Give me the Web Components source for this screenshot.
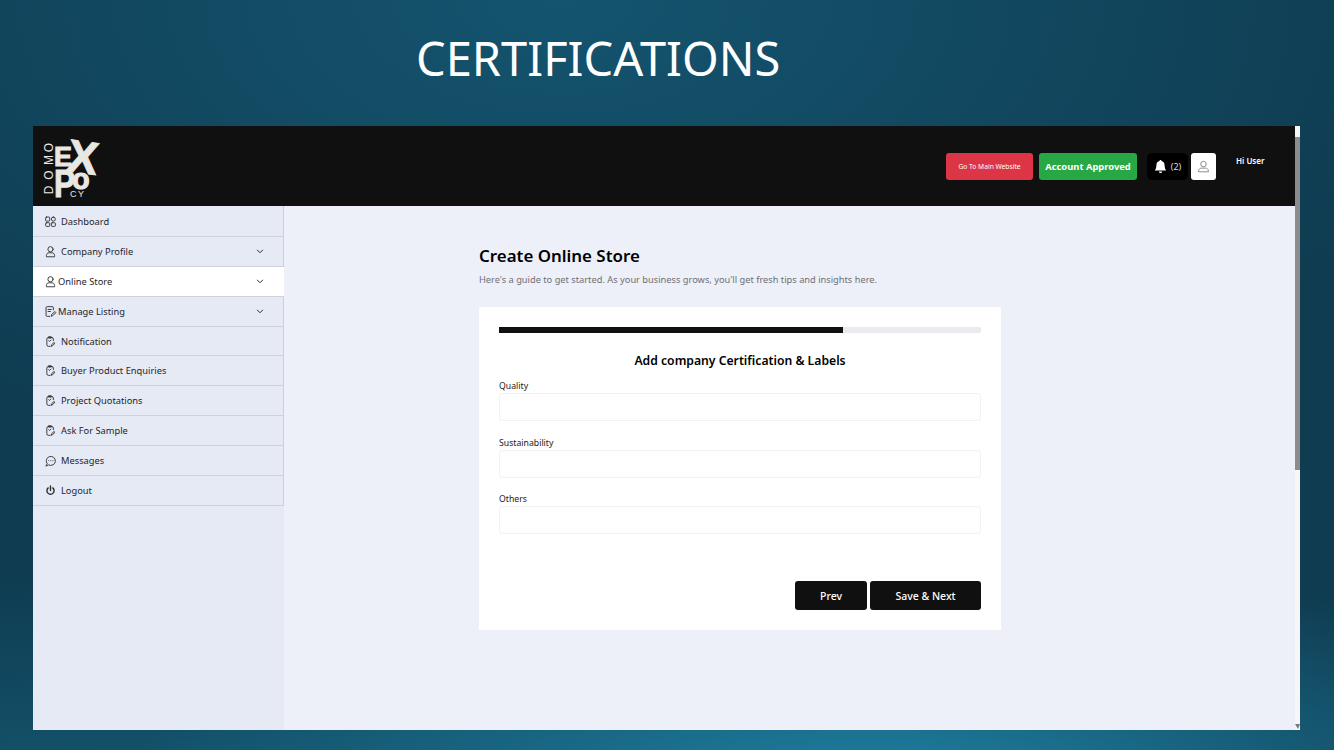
<!DOCTYPE html>
<html lang="en">
<head>
<meta charset="utf-8">
<title>Certifications</title>
<style>
html, body { margin: 0; height: 100%; overflow: hidden; }
body { font-family: "Noto Sans", sans-serif; }
</style>
</head>
<body>
<slide-page>
  <span slot="title">CERTIFICATIONS</span>
  <app-window>
    <app-header slot="header"></app-header>
    <side-nav slot="nav">
      <nav-item icon="grid" label="Dashboard"></nav-item>
      <nav-item icon="user" label="Company Profile" chevron></nav-item>
      <nav-item icon="user" label="Online Store" chevron active tight></nav-item>
      <nav-item icon="note" label="Manage Listing" chevron tight></nav-item>
      <nav-item icon="task" label="Notification"></nav-item>
      <nav-item icon="task" label="Buyer Product Enquiries"></nav-item>
      <nav-item icon="task" label="Project Quotations"></nav-item>
      <nav-item icon="task" label="Ask For Sample"></nav-item>
      <nav-item icon="chat" label="Messages"></nav-item>
      <nav-item icon="power" label="Logout"></nav-item>
    </side-nav>
    <store-form slot="main">
      <form-field label="Quality"></form-field>
      <form-field label="Sustainability"></form-field>
      <form-field label="Others"></form-field>
    </store-form>
  </app-window>
</slide-page>

<script>
const icons = {
  grid: '<rect x="2" y="2.5" width="5" height="5" rx="1"/><rect x="9" y="2.500" width="5" height="5" rx="2.500"/><rect x="2" y="9.500" width="5" height="4.500" rx="1"/><rect x="9" y="9.500" width="5" height="4.500" rx="1"/>',
  user: '<circle cx="8" cy="5.200" r="3.200"/><path d="M3 14v-1.200C3 10.800 4.600 9.600 6 9.600h4c1.400 0 3 1.200 3 3.200V14z"/>',
  note: '<path d="M11.500 6V3.500a1.500 1.500 0 0 0-1.500-1.500H4a1.500 1.500 0 0 0-1.500 1.500v9A1.500 1.500 0 0 0 4 14h3"/><path d="M5 5.500h4M5 8h3"/><path d="M9 13.500l.5-2 4-3.500 1.300 1.300-4 3.700z"/>',
  task: '<path d="M11.500 7V5a2 2 0 0 0-2-2h-4a2 2 0 0 0-2 2v7a2 2 0 0 0 2 2h2"/><path d="M6 2.200h3v1.600H6z"/><path d="M5.800 7l1 1 1.600-1.800"/><path d="M9 13.500l.4-1.600 3-2.700 1.100 1.100-3 2.800z"/>',
  chat: '<path d="M2.500 14.500l1.500-2.500a5.600 5.600 0 1 1 2 1.600z"/><path d="M5.800 8.200h.1M8.400 8.200h.1M11 8.200h.1"/>',
  power: '<path d="M8 2.500v5.500" stroke-width="1.700"/><path d="M5.200 4.800a4.400 4.400 0 1 0 5.600 0" stroke-width="1.700"/>'
}

customElements.define('slide-page', class extends HTMLElement {
  constructor () {
    super()
    this.attachShadow({ mode: 'open' }).innerHTML = `
      <style>
        :host {
          display: flex;
          flex-direction: column;
          width: 1334px;
          height: 750px;
          box-sizing: border-box;
          padding: 0 34px 20px 33px;
          background:
            radial-gradient(ellipse 760px 240px at 66% 106%, #1f84a6 0%, rgba(31,132,166,0) 100%),
            radial-gradient(ellipse 900px 220px at 10% 106%, #14566f 0%, rgba(20,86,111,0) 100%),
            radial-gradient(ellipse 900px 500px at 42% 0%, #14546f 0%, rgba(20,84,111,0) 100%),
            #0f3c51;
        }
        h1 {
          margin: 0;
          height: 126px;
          box-sizing: border-box;
          padding: 26px 0 0 383px;
          font: 400 47px/64px "Noto Sans", sans-serif;
          color: #fff;
        }
      </style>
      <h1><slot name="title"></slot></h1>
      <slot></slot>`
  }
})

customElements.define('app-window', class extends HTMLElement {
  constructor () {
    super()
    this.attachShadow({ mode: 'open' }).innerHTML = `
      <style>
        :host {
          display: grid;
          grid-template-columns: 1fr 5px;
          height: 604px;
          background: #fff;
        }
        .page {
          display: grid;
          grid-template-columns: 251px 1fr;
          grid-template-rows: 80px 1fr;
          min-width: 0;
        }
        .head { grid-column: 1 / 3; }
        .bar {
          display: flex;
          flex-direction: column;
          background: #f6f6f8;
        }
        .up { height: 11px; }
        .thumb { width: 5px; height: 333px; background: #8a8c90; }
        .rest { flex: 1; }
        .down {
          width: 0; height: 0;
          margin-bottom: 1px;
          border-left: 3px solid transparent;
          border-right: 2px solid transparent;
          border-top: 5px solid #77797d;
        }
      </style>
      <div class="page">
        <div class="head"><slot name="header"></slot></div>
        <slot name="nav"></slot>
        <slot name="main"></slot>
      </div>
      <div class="bar"><div class="up"></div><div class="thumb"></div><div class="rest"></div><div class="down"></div></div>`
  }
})

customElements.define('app-header', class extends HTMLElement {
  constructor () {
    super()
    this.attachShadow({ mode: 'open' }).innerHTML = `
      <style>
        :host {
          display: flex;
          align-items: flex-start;
          height: 80px;
          background: #111011;
          color: #fff;
          font-family: "Noto Sans", sans-serif;
        }
        .logo { margin: 2px 0 0 10px; flex: none; }
        .logo text { fill: #e9e7e2; font-family: "Liberation Sans", sans-serif; }
        .logo .big { font-weight: 700; stroke: #e9e7e2; stroke-width: 1px; }
        .tools {
          margin: 27px 0 0 auto;
          display: flex;
          align-items: center;
        }
        .btn {
          height: 27px;
          display: flex;
          align-items: center;
          justify-content: center;
          border-radius: 3px;
          box-sizing: border-box;
        }
        .site { width: 87px; background: #dc3545; font-size: 6.700px; margin-right: 6px; }
        .ok { width: 98px; background: #28a745; font-size: 9.400px; font-weight: 700; margin-right: 10px; }
        .bell { width: 41px; background: #000; font-size: 9px; gap: 4px; border-radius: 5px; margin-right: 3px; color: #ddd; }
        .me { width: 25px; background: #fff; border-radius: 3px; margin-right: 20px; }
        .hi { align-self: flex-start; margin: 1px 29px 0 0; font-size: 8px; font-weight: 600; line-height: 14px; width: 30px; white-space: nowrap; }
      </style>
      <svg class="logo" width="66" height="78" viewBox="0 -6 66 78" aria-label="Expo logo">
        <text transform="translate(9.500 13.500) rotate(-90)" text-anchor="middle" font-size="12">O</text>
        <text transform="translate(9.500 26) rotate(-90)" text-anchor="middle" font-size="12">M</text>
        <text transform="translate(9.500 41) rotate(-90)" text-anchor="middle" font-size="12">O</text>
        <text transform="translate(9.500 56) rotate(-90)" text-anchor="middle" font-size="12">D</text>
        <text class="big" x="11" y="32" font-size="27">E</text>
        <text class="big" x="40" y="39" font-size="46" text-anchor="middle" transform="rotate(8 40 22)">X</text>
        <text class="big" x="11" y="63" font-size="38" textLength="21" lengthAdjust="spacingAndGlyphs">P</text>
        <text class="big" x="29" y="54.500" font-size="29">o</text>
        <text x="27" y="63" font-size="9" letter-spacing="1.500">CY</text>
      </svg>
      <div class="tools">
        <div class="btn site">Go To Main Website</div>
        <div class="btn ok">Account Approved</div>
        <div class="btn bell">
          <svg width="13" height="13" viewBox="0 0 16 16" fill="#fff"><path d="M8 16a2 2 0 0 0 2-2H6a2 2 0 0 0 2 2zm.9-14.900a1 1 0 1 0-1.800 0A5 5 0 0 0 3 6c0 1.100-.5 5.200-2 7h14c-1.500-1.800-2-5.900-2-7a5 5 0 0 0-4.100-4.900z"/></svg>
          <span>(2)</span>
        </div>
        <div class="btn me">
          <svg width="13" height="13" viewBox="0 0 16 16" fill="none" stroke="#666" stroke-width="0.900"><circle cx="8" cy="5" r="3.400"/><path d="M2 14.500v-1.300C2 11.200 4 10 5.500 10h5c1.500 0 3.500 1.200 3.500 3.200v1.300z"/></svg>
        </div>
        <div class="hi">Hi User</div>
      </div>`
  }
})

customElements.define('side-nav', class extends HTMLElement {
  constructor () {
    super()
    this.attachShadow({ mode: 'open' }).innerHTML = `
      <style>
        :host {
          display: block;
          background: #e6eaf5;
          box-sizing: border-box;
        }
        .list {
          display: flex;
          flex-direction: column;
          padding-top: 1px;
          border-right: 1px solid #cdd0da;
        }
      </style>
      <div class="list"><slot></slot></div>`
  }
})

customElements.define('nav-item', class extends HTMLElement {
  connectedCallback () {
    const tight = this.hasAttribute('tight')
    this.attachShadow({ mode: 'open' }).innerHTML = `
      <style>
        :host {
          display: flex;
          align-items: center;
          height: 29.900px;
          box-sizing: border-box;
          border-bottom: 1px solid #cfd2dd;
          padding: 0 19px 0 11px;
          font: 400 9.300px "Noto Sans", sans-serif;
          color: #24262b;
        }
        :host([active]) { background: #fff; margin-right: -1px; padding-right: 20px; }
        svg.ico { flex: none; margin-right: ${tight ? 1 : 4}px; }
        .label { flex: 1; white-space: nowrap; }
        svg.chev { flex: none; }
      </style>
      <svg class="ico" width="13" height="13" viewBox="0 0 16 16" fill="none" stroke="#2a2c31" stroke-width="1.100" stroke-linejoin="round" stroke-linecap="round">${icons[this.getAttribute('icon')]}</svg>
      <span class="label">${this.getAttribute('label')}</span>
      ${this.hasAttribute('chevron') ? '<svg class="chev" width="8" height="5" viewBox="0 0 9 6" fill="none" stroke="#2a2c31" stroke-width="1.200"><path d="M1 1l3.500 3.500L8 1"/></svg>' : ''}`
  }
})

customElements.define('store-form', class extends HTMLElement {
  constructor () {
    super()
    this.attachShadow({ mode: 'open' }).innerHTML = `
      <style>
        :host {
          display: block;
          background: #edf0f8;
          padding: 39px 0 0 195px;
          color: #000;
          font-family: "Noto Sans", sans-serif;
        }
        h2 { margin: 0; font-size: 16.900px; font-weight: 600; line-height: 22px; }
        .sub { margin: 6px 0 20px; font-size: 9.270px; line-height: 14px; color: #6d6f75; }
        .card {
          width: 522px;
          height: 323px;
          box-sizing: border-box;
          background: #fff;
          padding: 20px;
          display: flex;
          flex-direction: column;
        }
        .track { height: 6px; background: #e9ebef; border-radius: 1px; flex: none; }
        .fill { width: 344px; height: 6px; background: #111011; }
        h3 { margin: 18px 0 9px; height: 19px; text-align: center; font-size: 12.200px; font-weight: 600; line-height: 19px; }
        .fields { display: flex; flex-direction: column; gap: 14.500px; }
        .actions { margin-top: auto; display: flex; justify-content: flex-end; gap: 3px; }
        button {
          height: 29px;
          border: 0;
          border-radius: 3px;
          background: #111011;
          color: #fff;
          font: 500 10.500px "Noto Sans", sans-serif;
        }
        .prev { width: 72px; }
        .next { width: 111px; }
      </style>
      <h2>Create Online Store</h2>
      <p class="sub">Here's a guide to get started. As your business grows, you'll get fresh tips and insights here.</p>
      <div class="card">
        <div class="track"><div class="fill"></div></div>
        <h3>Add company Certification &amp; Labels</h3>
        <div class="fields"><slot></slot></div>
        <div class="actions">
          <button class="prev">Prev</button>
          <button class="next">Save &amp; Next</button>
        </div>
      </div>`
  }
})

customElements.define('form-field', class extends HTMLElement {
  connectedCallback () {
    this.attachShadow({ mode: 'open' }).innerHTML = `
      <style>
        :host { display: block; font-family: "Noto Sans", sans-serif; }
        label { display: block; font-size: 8.700px; line-height: 12px; padding-top: 1px; margin-bottom: 1px; color: #222; }
        input {
          display: block;
          width: 100%;
          height: 28px;
          box-sizing: border-box;
          border: 1px solid #f1f2f4;
          border-radius: 3px;
          background: #fff;
        }
      </style>
      <label>${this.getAttribute('label')}</label>
      <input type="text">`
  }
})
</script>
</body>
</html>
